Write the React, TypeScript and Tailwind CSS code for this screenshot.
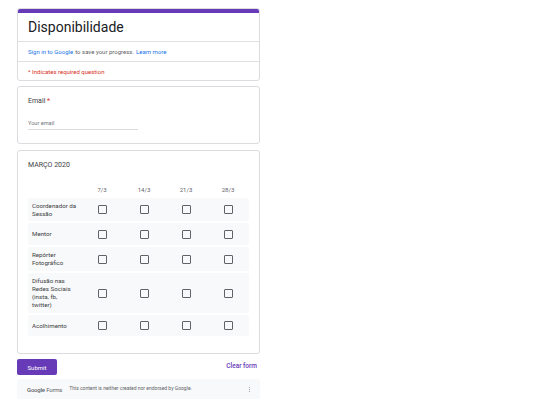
import React from 'react';

const dates = ['7/3', '14/3', '21/3', '28/3'];
const roles = [
  { label: 'Coordenador da Sessão', h: 'h-[23px]' },
  { label: 'Mentor', h: 'h-[22px]' },
  { label: 'Repórter Fotográfico', h: 'h-[24px]' },
  { label: 'Difusão nas Redes Sociais (insta, fb, twitter)', h: 'h-[40px]' },
  { label: 'Acolhimento', h: 'h-[21px]' },
];

const Checkbox = () => (
  <div className="w-[9px] h-[9px] border border-[#5f6368] rounded-[1px]" />
);

export default function App() {
  return (
    <div className="min-h-screen bg-white font-['Roboto',sans-serif] text-[#202124]">
      <div className="ml-[17px] w-[243px] pt-[8px] flex flex-col">
        {/* header card */}
        <div className="rounded-[3px] border border-[#dadce0] bg-white overflow-hidden">
          <div className="h-[4px] bg-[#673ab7]" />
          <div className="h-[28px] flex items-center px-[10px] text-[14px] leading-none font-normal text-[#202124]">
            Disponibilidade
          </div>
          <div className="h-[20px] flex items-center px-[10px] border-t border-[#e0e0e0] text-[6px]">
            <span className="text-[#1a73e8]">Sign in to Google</span>
            <span className="ml-[2px] text-[#5f6368]">to save your progress.</span>
            <span className="ml-[2px] text-[#1a73e8]">Learn more</span>
          </div>
          <div className="h-[19px] flex items-center px-[10px] border-t border-[#e0e0e0] text-[6px] text-[#d93025]">
            * Indicates required question
          </div>
        </div>

        {/* email card */}
        <div className="mt-[5px] h-[58px] rounded-[3px] border border-[#dadce0] bg-white px-[10px] pt-[10px]">
          <div className="text-[7px] leading-[8px] text-[#3c4043]">
            Email <span className="text-[#d93025]">*</span>
          </div>
          <div className="mt-[15px] w-[110px] border-b border-[#dadce0] pb-[2px] text-[5.6px] leading-[7px] text-[#70757a]">
            Your email
          </div>
        </div>

        {/* grid card */}
        <div className="mt-[6px] h-[204px] rounded-[3px] border border-[#dadce0] bg-white px-[10px] pt-[10px]">
          <div className="text-[7px] leading-[8px] text-[#3c4043]">MARÇO 2020</div>
          <div className="mt-[13px] grid grid-cols-[53px_repeat(4,1fr)] h-[14px] items-center text-[6px] text-[#5f6368]">
            <div />
            {dates.map((d) => (
              <div key={d} className="text-center">{d}</div>
            ))}
          </div>
          <div className="mt-[2px] flex flex-col gap-[2px]">
            {roles.map((r) => (
              <div
                key={r.label}
                className={`${r.h} grid grid-cols-[53px_repeat(4,1fr)] items-center bg-[#f8f9fa] rounded-[2px]`}
              >
                <div className="pl-[4px] pr-[4px] text-[6.2px] leading-[8px] text-[#3c4043]">{r.label}</div>
                {dates.map((d) => (
                  <div key={d} className="flex justify-center">
                    <Checkbox />
                  </div>
                ))}
              </div>
            ))}
          </div>
        </div>

        {/* actions */}
        <div className="mt-[5px] flex items-center justify-between">
          <button className="w-[40px] h-[16px] rounded-[2px] bg-[#673ab7] text-white text-[6px]">
            Submit
          </button>
          <span className="mr-[3px] text-[6.5px] font-medium text-[#673ab7]">Clear form</span>
        </div>

        {/* footer */}
        <div className="mt-[4px] h-[20px] rounded-[3px] bg-[#f8f9fa] flex items-center pl-[10px] pr-[10px]">
          <span className="text-[6px] text-[#5f6368] tracking-[-0.2px]">
            <span className="font-medium">Google</span> Forms
          </span>
          <span className="ml-[7px] text-[5px] text-[#5f6368]">
            This content is neither created nor endorsed by Google.
          </span>
          <span className="ml-auto flex flex-col gap-[1px]">
            <span className="w-[1px] h-[1px] bg-[#9aa0a6]" />
            <span className="w-[1px] h-[1px] bg-[#9aa0a6]" />
            <span className="w-[1px] h-[1px] bg-[#9aa0a6]" />
          </span>
        </div>
      </div>
    </div>
  );
}
